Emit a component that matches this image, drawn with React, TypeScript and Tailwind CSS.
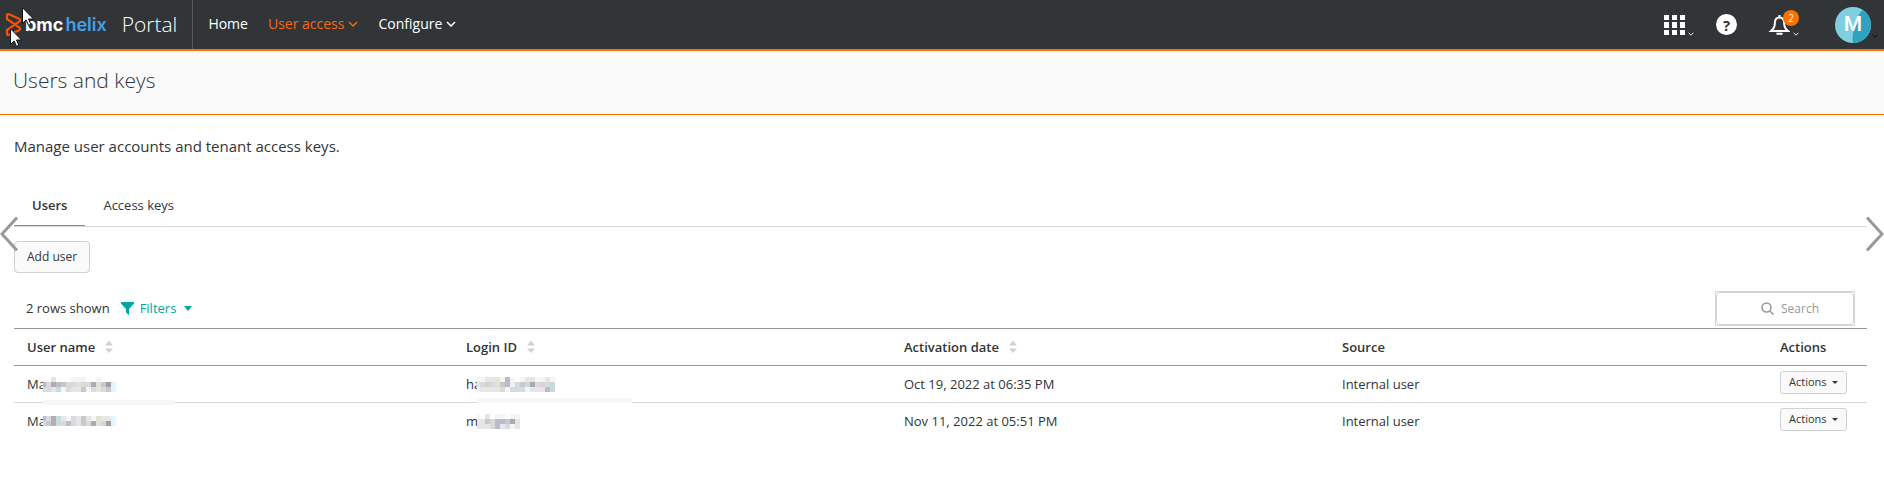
import React from "react";

function Chevron({ className }: { className: string }) {
  return (
    <svg viewBox="0 0 10 6" className={className} fill="none" stroke="currentColor" strokeWidth="1.5" aria-hidden="true">
      <path d="M1 1l4 4 4-4" />
    </svg>
  );
}

const palette: Record<string, string> = {
  a: "#a3a0a3", b: "#b8adb8", c: "#c9c8ca", d: "#d8dadb", e: "#e6e6e6", f: "#f3f5f6",
  l: "#c6dcda", p: "#baa8b4", y: "#e2e2d4", u: "#e6f4fd", s: "#b9bcc9", g: "#a5acb6",
  t: "#dccfbb", k: "#ddd0da",
};

const CELL = 5;
const FIRST_CELL = 3;

function Mosaic({ rows, label }: { rows: string[]; label: string }) {
  return (
    <svg
      role="img"
      aria-label={label}
      width={(rows[0].length - 1) * CELL + FIRST_CELL}
      height={rows.length * CELL}
      shapeRendering="crispEdges"
      className="relative shrink-0"
    >
      {rows.flatMap((row, y) =>
        row.split("").map((c, x) =>
          c === "." ? null : (
            <rect
              key={x + "-" + y}
              x={x === 0 ? 0 : FIRST_CELL + (x - 1) * CELL}
              y={y * CELL}
              width={x === 0 ? FIRST_CELL : CELL}
              height={CELL}
              fill={palette[c]}
            />
          )
        )
      )}
    </svg>
  );
}

const users = [
  {
    name: "Ma",
    nameMask: ["..e...fff..f...", "sdpscddyddgycau", "ddelfdeecfdedcu"],
    login: "ha",
    loginMask: ["ffeeefsf.feeffef", "edtdycsudclgdkdl", "feeeedfdddfeeesl"],
    date: "Oct 19, 2022 at 06:35 PM",
  },
  {
    name: "Ma",
    nameMask: ["sdplefdecefyeeu", "dcbldsdecdgykau"],
    login: "m",
    loginMask: ["f.e.ff.ff", "eecdsscge", "eeedsedfe"],
    date: "Nov 11, 2022 at 05:51 PM",
  },
];

function Sort() {
  return (
    <svg viewBox="0 0 8 14" className="h-[14px] w-2 text-[#d0d1d5]" fill="currentColor" aria-hidden="true">
      <path d="M0 5.500L4 .5 8 5.500zM0 8.500h8L4 13z" />
    </svg>
  );
}

function Pointer({ className }: { className: string }) {
  return (
    <svg viewBox="0 0 12 19" className={className} aria-hidden="true">
      <path d="M.5.7v15.600l3.600-3.400 2.400 5.400 2.300-1-2.300-5.300h5z" fill="#fff" stroke="#111" />
    </svg>
  );
}

export default function App() {
  return (
    <div className="relative min-h-screen bg-white font-['Open_Sans',sans-serif] text-[13px] leading-5 text-[#313538]">
      <header className="relative flex h-[51px] items-stretch border-b-2 border-[#fe7000] bg-[#313538] text-white">
        <a href="#" className="flex items-center pl-[5px]" aria-label="BMC Helix Portal">
          <svg viewBox="0 0 17 25" className="h-[25px] w-[17px]" fill="none" stroke="#fe5000" strokeWidth="2.200" strokeLinejoin="round" aria-hidden="true">
            <path d="M2 3.500Q2 1.500 4 2.200L14 6.800Q16 8 14.500 9.300L2 18V21.500Q2 23.500 4 22.800L14 18.200Q16 17 14.500 15.700L2 7z" />
          </svg>
          <span className="ml-[3px] font-['Inter',sans-serif] text-[18px] font-bold">bmc</span>
          <span className="ml-[2px] font-['Inter',sans-serif] text-[18px] font-semibold text-[#479fe5]">helix</span>
          <span className="ml-[15px] pb-[2px] text-[21px] font-light">Portal</span>
        </a>
        <nav className="ml-[15px] flex items-center gap-5 border-l border-[#55595c] pb-[2px] pl-[15px] text-[14px]">
          <a href="#">Home</a>
          <button type="button" className="flex items-center gap-1 text-[#f9670c]">
            User access
            <Chevron className="h-[6px] w-[10px]" />
          </button>
          <button type="button" className="flex items-center gap-1">
            Configure
            <Chevron className="h-[6px] w-[10px]" />
          </button>
        </nav>
        <div className="ml-auto flex items-center pr-[6px]">
          <button type="button" aria-label="Applications" className="flex items-end">
            <svg viewBox="0 0 21 20" className="h-5 w-[21px]" fill="currentColor" shapeRendering="crispEdges" aria-hidden="true">
              <path d="M0 0h5v5H0zM8 0h5v5H8zM16 0h5v5h-5zM0 7h5v6H0zM8 7h5v6H8zM16 7h5v6h-5zM0 15h5v5H0zM8 15h5v5H8zM16 15h5v5h-5z" />
            </svg>
            <Chevron className="ml-[3px] -mb-px h-1 w-[6px]" />
          </button>
          <button type="button" aria-label="Help" className="ml-[22px] flex size-[21px] items-center justify-center rounded-full bg-white text-[15px] font-bold text-[#313538]">
            ?
          </button>
          <button type="button" aria-label="Notifications, 2 new" className="relative ml-8 flex items-end">
            <svg viewBox="0 0 21 20" className="h-5 w-[21px]" fill="none" stroke="currentColor" strokeWidth="2" aria-hidden="true">
              <path d="M2 16c2.800-2 3.800-4 3.800-7.400C5.800 5 7.500 2.500 10.500 2.500s4.700 2.500 4.700 6.100c0 3.400 1 5.400 3.800 7.400z" />
              <path d="M10.500 0v3M7.500 18.800h6" />
            </svg>
            <Chevron className="ml-[3px] -mb-px h-1 w-[6px]" />
            <span className="absolute -top-[5px] left-[14px] flex size-4 items-center justify-center rounded-full bg-[#fe7000] text-[10px]">2</span>
          </button>
          <button type="button" aria-label="Account" className="relative ml-9 flex items-end">
            <span className="relative block size-9 overflow-hidden rounded-full bg-[#7fcfdf]">
              <svg viewBox="0 0 36 36" className="absolute inset-0 size-9" aria-hidden="true">
                <path d="M28 3c-4 3-6 7-6 13-3 5-5 10-4 20h18V0z" fill="#2ea2bf" />
              </svg>
              <span className="relative flex size-9 items-center justify-center pb-[2px] font-['Roboto',sans-serif] text-[21px] font-medium">M</span>
            </span>
            <Chevron className="ml-px mb-[5px] h-1 w-[6px] text-black" />
          </button>
        </div>
        <Pointer className="absolute left-[22px] top-[7px] h-[19px] w-3" />
        <Pointer className="absolute left-[10px] top-[28px] h-[19px] w-3" />
      </header>

      <div className="flex h-16 items-center border-b border-[#fe7000] bg-[#fafafa] px-[13px] pb-[5px]">
        <h1 className="text-[21px] font-light">Users and keys</h1>
      </div>

      <main className="pl-[14px] pr-[17px]">
        <p className="pt-[21px] text-[15px]">Manage user accounts and tenant access keys.</p>
        <div role="tablist" className="mt-[29px] flex h-[42px] border-b border-[#d6d7d9]">
          <button role="tab" type="button" aria-selected="true" className="border-b border-[#fe7000] px-[18px] pb-px font-semibold">Users</button>
          <button role="tab" type="button" aria-selected="false" className="px-[18px] pb-[2px]">Access keys</button>
        </div>
        <button type="button" className="mt-[14px] h-8 rounded-sm border border-[#d0d1d5] bg-[#fafafa] px-3 text-[12px]">Add user</button>

        <div className="flex h-[55px] items-end justify-between px-3 pb-[2px]">
          <div className="flex h-[35px] items-center pb-px">
            <span>2 rows shown</span>
            <button type="button" className="ml-[11px] flex items-center text-[#00a79d]">
              <svg viewBox="0 0 13 13" className="h-[13px] w-[13px]" fill="currentColor" aria-hidden="true">
                <path d="M0 0h13v1.500L8 7v6l-3-2.500V7L0 1.500z" />
              </svg>
              <span className="ml-[6px]">Filters</span>
              <svg viewBox="0 0 8 5" className="ml-2 h-[5px] w-2" fill="currentColor" aria-hidden="true"><path d="M0 0h8L4 5z" /></svg>
            </button>
          </div>
          <label className="flex h-[35px] w-[140px] border border-[#d6d7d9]">
            <span className="flex flex-1 items-center rounded-sm border border-[#d0d1d5] pl-[44px] text-[#959899]">
              <svg viewBox="0 0 13 13" className="h-[13px] w-[13px] shrink-0" fill="none" stroke="currentColor" strokeWidth="1.500" aria-hidden="true">
                <circle cx="5.500" cy="5.500" r="4.500" /><path d="M8.700 8.700L12.500 12.500" />
              </svg>
              <input type="text" aria-label="Search" placeholder="Search" className="ml-[7px] w-16 bg-transparent text-[12px] outline-none placeholder:text-[#959899]" />
            </span>
          </label>
        </div>

        <table className="w-full table-fixed border-collapse text-left">
          <colgroup>
            <col /><col /><col /><col /><col className="w-[101px]" />
          </colgroup>
          <thead>
            <tr className="h-[37px] border-y border-[#959899]">
              {["User name", "Login ID", "Activation date", "Source", "Actions"].map((h, i) => (
                <th key={h} scope="col" className="px-[14px] py-0 font-semibold first:pl-[13px]">
                  <span className="flex items-center gap-[10px]">{h}{i < 3 && <Sort />}</span>
                </th>
              ))}
            </tr>
          </thead>
          <tbody>
            {users.map((u, i) => (
              <tr key={u.date} className={i === 0 ? "h-[37px] border-b border-[#d6d7d9]" : "h-[37px]"}>
                <td className="relative px-[13px] py-0">
                  <span className="flex items-center"><span className="w-4">{u.name}</span><Mosaic rows={u.nameMask} label="Hidden name" /></span>
                  {i === 0 && <span className="absolute -bottom-[3px] left-[29px] h-[5px] w-[132px] bg-[#f7f7f7]" />}
                </td>
                <td className="relative px-[14px] py-0">
                  <span className="flex items-center"><span className="w-[11px]">{u.login}</span><Mosaic rows={u.loginMask} label="Hidden login" /></span>
                  {i === 0 && <span className="absolute -bottom-px left-[25px] h-[5px] w-[155px] bg-[#f7f7f7]" />}
                </td>
                <td className="px-[14px] py-0">{u.date}</td>
                <td className="px-[14px] py-0">Internal user</td>
                <td className="px-[14px] pb-1 pt-0">
                  <button type="button" className="flex h-[23px] items-center gap-[5px] rounded-[3px] border border-[#d0d1d5] bg-[#fafafa] px-2 text-[11px]">
                    Actions
                    <svg viewBox="0 0 6 3" className="h-[3px] w-[6px]" fill="currentColor" aria-hidden="true"><path d="M0 0h6L3 3z" /></svg>
                  </button>
                </td>
              </tr>
            ))}
          </tbody>
        </table>
      </main>

      <button type="button" aria-label="Previous" className="absolute left-0 top-[216px] text-[#999]">
        <svg viewBox="0 0 18 36" className="h-9 w-[18px]" fill="none" stroke="currentColor" strokeWidth="3" aria-hidden="true"><path d="M17 1.500L2 18l15 16.500" /></svg>
      </button>
      <button type="button" aria-label="Next" className="absolute right-0 top-[216px] text-[#999]">
        <svg viewBox="0 0 18 36" className="h-9 w-[18px]" fill="none" stroke="currentColor" strokeWidth="3" aria-hidden="true"><path d="M1 1.500L16 18 1 34.500" /></svg>
      </button>
    </div>
  );
}
